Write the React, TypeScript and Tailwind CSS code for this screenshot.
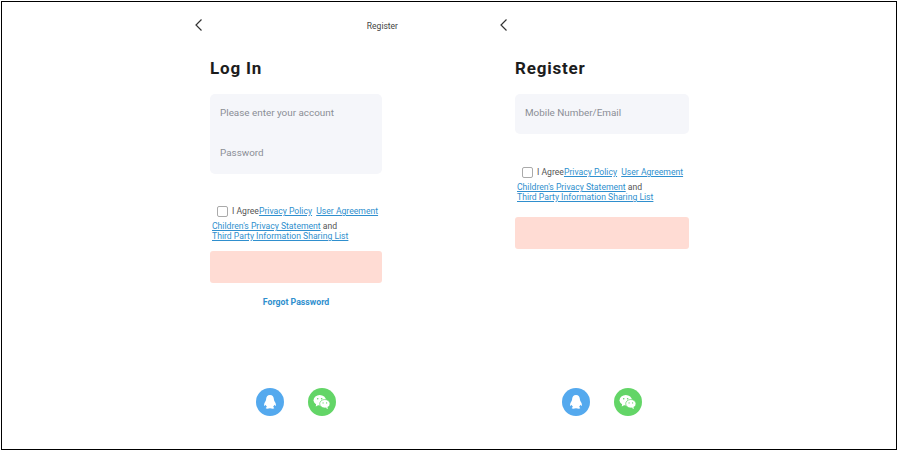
const font = { fontFamily: "Roboto, 'Liberation Sans', sans-serif" };

function Back() {
  return (
    <svg width="9" height="14" viewBox="0 0 9 14" fill="none" className="block mb-[1px]">
      <path d="M7.5 1.5 L2 7 L7.5 12.5" stroke="#333" strokeWidth="1.2" />
    </svg>
  );
}

function QQ() {
  return (
    <div className="w-[28px] h-[28px] rounded-full bg-[#54a9ee] flex items-center justify-center">
      <svg width="14" height="16" viewBox="0 0 16 18" fill="#fff">
        <path d="M8 1C5 1 3.6 3.2 3.5 6C3.4 7.2 2.7 8 2 9.5C1.2 11.2 1 13 1.6 13.4C2 13.6 2.6 13 3.1 12.2C3.3 13.3 3.9 14.2 4.6 14.8C3.6 15.2 3 15.7 3.2 16.2C3.5 16.9 5.8 16.9 8 16.2C10.2 16.9 12.5 16.9 12.8 16.2C13 15.7 12.4 15.2 11.4 14.8C12.1 14.2 12.7 13.3 12.9 12.2C13.4 13 14 13.6 14.4 13.4C15 13 14.8 11.2 14 9.5C13.3 8 12.6 7.2 12.5 6C12.4 3.2 11 1 8 1Z" />
      </svg>
    </div>
  );
}

function WeChat() {
  return (
    <div className="w-[28px] h-[28px] rounded-full bg-[#63d567] flex items-center justify-center">
      <svg width="18" height="16" viewBox="0 0 20 18">
        <ellipse cx="7.5" cy="7" rx="7" ry="5.8" fill="#fff" />
        <path d="M3.5 10.5 L3 14 L6.5 12 Z" fill="#fff" />
        <ellipse cx="13.2" cy="11" rx="5.8" ry="4.8" fill="#fff" stroke="#63d567" strokeWidth="0.8" />
        <path d="M16 14.5 L16.8 17 L13.8 15.5 Z" fill="#fff" />
        <circle cx="5.2" cy="5.4" r="0.9" fill="#63d567" />
        <circle cx="9.6" cy="5.4" r="0.9" fill="#63d567" />
        <circle cx="11.2" cy="10" r="0.7" fill="#63d567" />
        <circle cx="15.2" cy="10" r="0.7" fill="#63d567" />
      </svg>
    </div>
  );
}

function Agreement() {
  const link = "text-[#2f8fce] underline";
  return (
    <div className="text-[8.65px] leading-[10px] text-[#555] pl-[2px]">
      <div className="flex items-center pl-[5px] h-[12px]">
        <span className="w-[11px] h-[11px] border border-[#aaa] rounded-[2px] mr-[4px] shrink-0" />
        <span className="whitespace-nowrap">
          I Agree<span className={link}>Privacy Policy</span> <span className={`${link} ml-[2px]`}>User Agreement</span>
        </span>
      </div>
      <div className="mt-[4px] whitespace-nowrap">
        <span className={link}>Children's Privacy Statement</span> and
      </div>
      <div className="whitespace-nowrap">
        <span className={link}>Third Party Information Sharing List</span>
      </div>
    </div>
  );
}

function Field({ text }: { text: string }) {
  return <div className="h-[40px] pl-[10px] pb-[2px] flex items-center text-[9.9px] text-[#8b8e96]">{text}</div>;
}

function Screen({
  title,
  fields,
  register,
  rootClass,
  fieldClass,
  gapTop,
  buttonClass,
  forgot,
  socialClass,
}: {
  title: string;
  fields: string[];
  register?: boolean;
  rootClass: string;
  fieldClass: string;
  gapTop: string;
  buttonClass: string;
  forgot?: boolean;
  socialClass: string;
}) {
  return (
    <div className={`w-[220px] h-full flex flex-col ${rootClass}`}>
      <div className="h-[46px] pl-[4px] pr-[12px] flex items-center justify-between">
        <Back />
        {register && <span className="text-[8.5px] text-[#444] mt-[2px]">Register</span>}
      </div>
      <div className="pl-[20px] flex-1 flex flex-col">
        <h1 className="text-[17px] leading-[22px] font-bold tracking-[0.8px] text-[#1c1c1c] mt-[9px] mb-[15px]">{title}</h1>
        <div className={`bg-[#f5f6fa] rounded-[5px] ${fieldClass}`}>
          {fields.map((f) => (
            <Field key={f} text={f} />
          ))}
        </div>
        <div className={gapTop}>
          <Agreement />
        </div>
        <div className={`h-[32px] rounded-[3px] bg-[#ffdcd4] ${buttonClass}`} />
        {forgot && (
          <div className="w-[172px] mt-[14px] text-center text-[8.75px] leading-[11px] font-bold text-[#2f8fce]">
            Forgot Password
          </div>
        )}
      </div>
      <div className={`flex gap-[24px] pb-[33px] ${socialClass}`}>
        <QQ />
        <WeChat />
      </div>
    </div>
  );
}

export default function App() {
  return (
    <div style={font} className="ml-[1px] mt-[1px] w-[896px] h-[449px] border border-black bg-white">
      <div className="flex h-full pl-[188px]">
        <Screen
          title="Log In"
          fields={["Please enter your account", "Password"]}
          register
          rootClass=""
          fieldClass="w-[172px]"
          gapTop="mt-[31px]"
          buttonClass="w-[172px] mt-[10px]"
          forgot
          socialClass="pl-[66px]"
        />
        <Screen
          title="Register"
          fields={["Mobile Number/Email"]}
          rootClass="ml-[85px]"
          fieldClass="w-[174px]"
          gapTop="mt-[32px]"
          buttonClass="w-[174px] mt-[15px]"
          socialClass="pl-[67px]"
        />
      </div>
    </div>
  );
}
